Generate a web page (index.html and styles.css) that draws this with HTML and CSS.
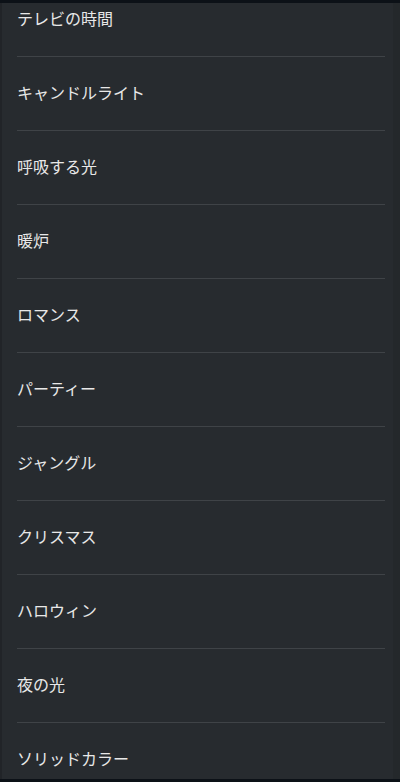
FILE: index.html
```html
<!DOCTYPE html>
<html lang="ja">
<head>
<meta charset="utf-8">
<link rel="stylesheet" href="styles.css">
</head>
<body>
<div class="screen">
  <div class="topbar"></div>
  <div class="viewport">
    <ul class="list">
      <li class="item">テレビの時間</li>
      <li class="item">キャンドルライト</li>
      <li class="item">呼吸する光</li>
      <li class="item">暖炉</li>
      <li class="item">ロマンス</li>
      <li class="item">パーティー</li>
      <li class="item">ジャングル</li>
      <li class="item">クリスマス</li>
      <li class="item">ハロウィン</li>
      <li class="item">夜の光</li>
      <li class="item">ソリッドカラー</li>
    </ul>
  </div>
  <div class="bottombar"></div>
</div>
</body>
</html>
```

FILE: styles.css
```css
html, body {
  margin: 0;
  padding: 0;
  height: 100%;
  background: #272b2f;
}
.screen {
  width: 400px;
  height: 782px;
  display: flex;
  flex-direction: column;
  overflow: hidden;
}
.topbar {
  height: 3px;
  flex: none;
  background: #0c1117;
}
.bottombar {
  height: 3px;
  flex: none;
  background: #0c1117;
}
.viewport {
  flex: 1;
  overflow: hidden;
  background: #272b2f;
  border-left: 2px solid #212428;
  border-right: 7px solid #24282b;
}
.list {
  list-style: none;
  margin: -20px 0 0 0;
  padding: 0 8px 0 15px;
  font-family: "Noto Sans CJK JP", "Noto Sans", sans-serif;
  font-size: 16px;
  color: #e8e8e8;
}
.item {
  height: 74px;
  box-sizing: border-box;
  padding-bottom: 4px;
  display: flex;
  align-items: center;
  border-bottom: 1px solid #3f4347;
  line-height: 1;
}
.item:last-child {
  border-bottom: none;
}
```
